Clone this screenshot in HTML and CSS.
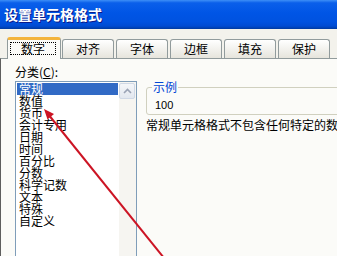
FILE: index.html
```html
<!DOCTYPE html>
<html lang="zh-CN">
<head>
    <meta charset="UTF-8">
    <meta name="viewport" content="width=device-width, initial-scale=1.0">
    <title>设置单元格格式</title>
    <link rel="stylesheet" href="styles.css">
</head>
<body>

<div class="window">
    <div class="titlebar">设置单元格格式</div>

    <div class="dialog">
        <div class="tabs">
            <div class="tab active"><span class="focus">数字</span></div>
            <div class="tab">对齐</div>
            <div class="tab">字体</div>
            <div class="tab">边框</div>
            <div class="tab">填充</div>
            <div class="tab">保护</div>
        </div>

        <div class="page">
            <div class="left">
                <div class="label">分类(<u>C</u>):</div>
                <div class="listbox">
                    <ul class="items">
                        <li class="selected">常规</li>
                        <li>数值</li>
                        <li>货币</li>
                        <li>会计专用</li>
                        <li>日期</li>
                        <li>时间</li>
                        <li>百分比</li>
                        <li>分数</li>
                        <li>科学记数</li>
                        <li>文本</li>
                        <li>特殊</li>
                        <li>自定义</li>
                    </ul>
                    <div class="scrollbar">
                        <div class="scroll-up">
                            <svg width="9" height="6" viewBox="0 0 9 6">
                                <path d="M1 5 L4.5 1.5 L8 5" fill="none" stroke="#9aa3b5" stroke-width="1.6"/>
                            </svg>
                        </div>
                    </div>
                </div>
            </div>

            <div class="right">
                <fieldset class="sample">
                    <legend>示例</legend>
                    <span class="sample-value">100</span>
                </fieldset>
                <p class="desc">常规单元格格式不包含任何特定的数字格式。</p>
            </div>
        </div>
    </div>

    <!-- red annotation arrow -->
    <svg class="arrow" width="337" height="256" viewBox="0 0 337 256">
        <line x1="164" y1="258" x2="48" y2="114" stroke="#cc1424" stroke-width="2"/>
        <polygon points="44,109 54,114 47.5,119.5" fill="#cc1424"/>
    </svg>
</div>

</body>
</html>
```

FILE: styles.css
```css
body {
    margin: 0;
    width: 337px;
    height: 256px;
    overflow: hidden;
    font-family: "Noto Sans CJK SC", sans-serif;
    font-size: 12px;
    color: #000;
}
.window {
    position: relative;
    width: 337px;
    height: 256px;
    overflow: hidden;
    background-color: #f3f2ec;
}
.titlebar {
    height: 29px;
    line-height: 29px;
    padding-left: 4px;
    color: #fff;
    font-size: 14px;
    font-weight: bold;
    text-shadow: 1px 1px #0a1a8a;
    background: linear-gradient(to bottom, #3d8ff7 0%, #0a5fea 10%, #0055e5 45%, #0052e0 75%, #004bd2 90%, #003aa0 100%);
}
.dialog {
    padding-top: 8px;
}
.tabs {
    display: flex;
    align-items: flex-end;
    height: 21px;
    padding-left: 7px;
}
.tab {
    box-sizing: border-box;
    width: 52px;
    height: 19px;
    margin-left: 2px;
    line-height: 18px;
    text-align: center;
    border: 1px solid #919b9c;
    border-bottom: none;
    border-radius: 3px 3px 0 0;
    background: linear-gradient(to bottom, #ffffff, #f0efea 60%, #e6e4dc);
}
.tab.active {
    position: relative;
    z-index: 1;
    width: 54px;
    height: 22px;
    margin-left: 0;
    margin-right: -1px;
    margin-bottom: -1px;
    border-top: 3px solid #f3b43c;
    background: #fbfbf8;
}
.focus {
    display: block;
    box-sizing: border-box;
    width: 46px;
    height: 13px;
    margin: 2px 0 0 2px;
    line-height: 11px;
    border: 1px dotted #000;
}
.page {
    display: flex;
    height: 200px;
    padding: 6px 0 0 14px;
    border-top: 1px solid #919b9c;
    border-left: 1px solid #5e5e5e;
    background-color: #fbfbf8;
}
.label {
    height: 14px;
    line-height: 14px;
}
.listbox {
    display: flex;
    box-sizing: border-box;
    width: 122px;
    height: 200px;
    margin-top: 2px;
    border: 1px solid #7f9db9;
    background-color: #fff;
}
.items {
    flex: 1;
    margin: 0;
    padding: 1px;
    list-style: none;
}
.items li {
    height: 12px;
    line-height: 12px;
    padding-left: 2px;
    white-space: nowrap;
}
.items li.selected {
    background-color: #316ac5;
    color: #fff;
}
.scrollbar {
    width: 17px;
    background-color: #f6f5f1;
}
.scroll-up {
    display: flex;
    align-items: center;
    justify-content: center;
    box-sizing: border-box;
    height: 16px;
    margin: 1px 1px 0 0;
    border: 1px solid #cfd8e6;
    border-radius: 2px;
    background: linear-gradient(to bottom, #f4f6f9, #e2e7ef);
}
.right {
    margin: 15px 0 0 9px;
}
.sample {
    width: 220px;
    margin: 0;
    padding: 4px 8px 2px 8px;
    border: 1px solid #d0d0bf;
    border-radius: 3px;
}
.sample legend {
    margin-left: -3px;
    padding: 0 1px;
    line-height: 14px;
    color: #0046d5;
}
.sample-value {
    display: block;
    height: 14px;
    line-height: 14px;
    font-family: "Liberation Sans", sans-serif;
    font-size: 11px;
}
.desc {
    margin: 3px 0 0 0;
    line-height: 14px;
    white-space: nowrap;
}
.arrow {
    position: absolute;
    left: 0;
    top: 0;
    pointer-events: none;
}
```
